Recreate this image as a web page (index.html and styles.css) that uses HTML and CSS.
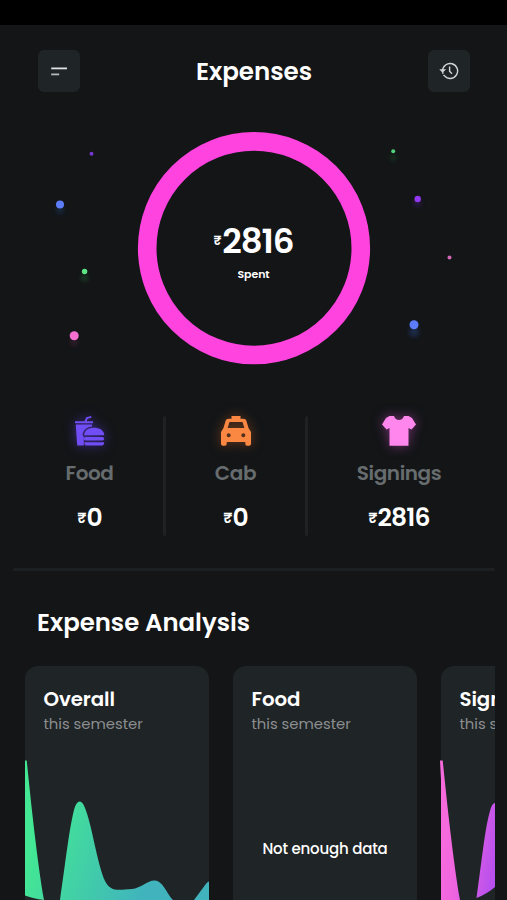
FILE: index.html
```html
<!DOCTYPE html>
<html lang="en">
<head>
<meta charset="utf-8">
<title>Expenses</title>
<link rel="stylesheet" href="styles.css">
</head>
<body>
<div class="status"></div>
<header class="header">
  <button class="icon-btn" aria-label="Menu">
    <svg width="18" height="18" viewBox="0 0 18 18" fill="none" stroke="#dfe2e3" stroke-width="1.8"><path d="M1.2 6.4H17"/><path d="M1.2 12.4H9.2" stroke="#b4b8ba"/></svg>
  </button>
  <h1>Expenses</h1>
  <button class="icon-btn" aria-label="History">
    <svg width="20" height="18" viewBox="0 0 20 18" fill="none" stroke="#d3d7d8" stroke-width="1.4"><path d="M3.600 9A7.500 7.500 0 1 1 5.600 14.100" /><path d="M5.600 14.100A7.500 7.500 0 0 1 3.600 9" stroke-dasharray="1.600 1.200"/><path d="M.8 7.500H6.600L3.600 10.500Z" fill="#d3d7d8" stroke-width=".5"/><path d="M10.600 4.600V9.200L13 11.700"/></svg>
  </button>
</header>
<section class="hero">
  <svg class="ring" width="507" height="256" viewBox="0 120 507 256">
    <defs><filter id="soft" x="-2" y="-2" width="5" height="5"><feGaussianBlur stdDeviation="2.2"/></filter></defs>
    <circle cx="254" cy="248.200" r="106.800" fill="none" stroke="#ff43df" stroke-width="18.600"/>
    <g filter="url(#soft)" opacity=".28">
      <circle cx="60" cy="210" r="4" fill="#2456a0"/><circle cx="84.500" cy="278" r="3.500" fill="#28a044"/><circle cx="74" cy="342" r="4" fill="#70305a"/>
      <circle cx="393" cy="158" r="3" fill="#28803a"/><circle cx="417.500" cy="203" r="4" fill="#5a2aa0"/><circle cx="414" cy="332" r="5" fill="#3468d0"/>
    </g>
    <circle cx="91.500" cy="153.700" r="2" fill="#7437cf"/><circle cx="60" cy="204.500" r="4" fill="#5c7cfa"/><circle cx="84.600" cy="271.500" r="2.700" fill="#5be584"/><circle cx="74.200" cy="335.800" r="4.500" fill="#f56fd3"/>
    <circle cx="393.200" cy="151.300" r="2" fill="#52d17b"/><circle cx="417.700" cy="199" r="3.200" fill="#9237f0"/><circle cx="449.500" cy="257.500" r="2" fill="#d567b8"/><circle cx="414" cy="324.800" r="4.500" fill="#5c7cfa"/>
  </svg>
  <div class="total">
    <div class="total-value"><span class="cur">₹</span><span>2816</span></div>
    <div class="total-label">Spent</div>
  </div>
</section>
<section class="stats">
  <div class="stat food">
    <svg class="glyph" width="30" height="32" viewBox="1 0 30 32" fill="currentColor"><path d="M1 6.200H10.500L12.300 2.200L17 1L17.600 2.700L13.700 3.800L12.600 6.200H19V8.200H1Z"/><path d="M1.700 9.500H18V11.400C13 12 9.300 14.800 8.700 19C8.300 20 9 21 9.800 21.700V30.600H3.200Z"/><path d="M10.200 20.200C10.200 15.300 14.700 12.800 20 12.800S30.200 15.300 30.200 20.200Z"/><rect x="9.800" y="22" width="20.400" height="3.600" rx="1.800"/><path d="M10.200 27.200H30.200C30.200 29.500 29 30.600 27.500 30.600H13C11.300 30.600 10.200 29.500 10.200 27.200Z"/></svg>
    <div class="label">Food</div>
    <div class="amount"><span class="cur">₹</span><span>0</span></div>
  </div>
  <div class="rule"></div>
  <div class="stat cab">
    <svg class="glyph" width="32" height="32" viewBox="0 0 32 32" fill="currentColor"><path fill-rule="evenodd" d="M11.500 1H20.500V3.800H23C25 3.800 26 4.600 26.500 6.200L28.500 13L31 17V28.500C31 30 30.300 30.700 29 30.700H27.200C26 30.700 25.300 30 25.300 28.500V27H6.700V28.500C6.700 30 6 30.700 4.800 30.700H3C1.700 30.700 1 30 1 28.500V17L3.500 13L5.500 6.200C6 4.600 7 3.800 9 3.800H11.500ZM9.500 7L7.600 13H24.400L22.500 7ZM8.700 18.300A2 2 0 1 0 8.700 22.300A2 2 0 1 0 8.700 18.300ZM23.300 18.300A2 2 0 1 0 23.300 22.300A2 2 0 1 0 23.300 18.300Z"/></svg>
    <div class="label">Cab</div>
    <div class="amount"><span class="cur">₹</span><span>0</span></div>
  </div>
  <div class="rule"></div>
  <div class="stat signings">
    <svg class="glyph" width="36" height="32" viewBox="0 0 36 32" fill="currentColor"><path d="M8.500 1H13C14 3.500 15.500 5 18 5S22 3.500 23 1H27.500L31 3L35 9.500L30.500 14.500L27.500 13V30.700H8.500V13L5.500 14.500L1 9.500L5 3Z"/></svg>
    <div class="label">Signings</div>
    <div class="amount"><span class="cur">₹</span><span>2816</span></div>
  </div>
</section>
<hr>
<h2>Expense Analysis</h2>
<section class="cards">
  <article class="card">
    <h3>Overall</h3><p class="sub">this semester</p>
    <svg class="chart" width="184" height="140" viewBox="0 0 184 140"><defs><linearGradient id="g1" gradientUnits="userSpaceOnUse" x1="0" y1="110" x2="115" y2="150"><stop stop-color="#43e794"/><stop offset="1" stop-color="#40b3bd"/></linearGradient></defs><path fill="url(#g1)" d="M0 .500H1.700C6 42 12 100 19 140C12 139 6 138 0 135.500ZM35 140C41 99 44 70 49 50C52 39 57 39 60 48C67 65 72 103 80 121C86 132 92 130 107 129C116 128 123 120 130 120.500C138 121 142 134 148 140ZM169 140L179 126.500Q182 122 184 121.500V140Z"/></svg>
  </article>
  <article class="card">
    <h3>Food</h3><p class="sub">this semester</p>
    <div class="empty">Not enough data</div>
  </article>
  <article class="card">
    <h3>Signings</h3><p class="sub">this semester</p>
    <svg class="chart" width="184" height="140" viewBox="0 0 184 140"><defs><linearGradient id="g2" gradientUnits="userSpaceOnUse" x1="0" y1="90" x2="62" y2="100"><stop stop-color="#f66bdc"/><stop offset=".3" stop-color="#ef65e0"/><stop offset="1" stop-color="#ad4cf0"/></linearGradient></defs><path fill="url(#g2)" d="M-1 .500H1.700C6 42 12 100 19 140H0V20ZM35.500 138C41 99 44 68 49 51Q51 43 54 43V127Q46 134 35.500 138Z"/></svg>
  </article>
</section>
</body>
</html>
```
FILE: styles.css
```css
* { box-sizing: border-box; margin: 0; padding: 0; }
body {
  width: 507px; height: 900px; overflow: hidden;
  background: #131517; color: #fff;
  font-family: Poppins, Inter, "Noto Sans", sans-serif;
  font-weight: 600;
}
span { display: inline-block; white-space: nowrap; }
.status { height: 25px; background: #000; }
.header { display: flex; justify-content: space-between; align-items: center; height: 92px; padding: 0 37px 0 38px; }
.icon-btn { display: grid; place-items: center; width: 42px; height: 42px; border: 0; border-radius: 6px; background: #1f2426; }
h1 { font-size: 24.6px; line-height: 30px; font-weight: 600; padding-top: 1px; letter-spacing: -0.05px; }
.hero { display: grid; height: 256px; margin-top: 3px; }
.ring, .total { grid-area: 1 / 1; }
.total { padding-top: 100px; text-align: center; }
.total-value { display: flex; justify-content: center; align-items: center; height: 42px; font-size: 34px; line-height: 42px; letter-spacing: -1.1px; }
.total-value .cur { font-size: 13px; letter-spacing: 0.8px; }
.total-label { font-size: 11px; line-height: 16px; margin-top: 4px; letter-spacing: -0.1px; }
.stats { display: flex; height: 120px; margin-top: 40px; }
.rule { width: 3px; border-radius: 2px; background: #1e2224; }
.stat { display: flex; flex-direction: column; align-items: center; }
.food { width: 147px; margin-left: 16px; }
.cab { width: 139px; }
.signings { width: 182px; }
.glyph { display: block; flex: none; margin-top: -1px; overflow: visible; }
.food .glyph { color: #714df5; filter: drop-shadow(0 0 6px #5b3ce299); }
.cab .glyph { color: #fa8843; filter: drop-shadow(0 0 6px #c95f2480); }
.signings .glyph { color: #ff86ec; filter: drop-shadow(0 0 6px #d64dcb80); }
.label { font-size: 20px; line-height: 24px; margin-top: 14px; color: #676c6e; letter-spacing: -0.4px; }
.amount { display: flex; align-items: center; font-size: 25px; line-height: 30px; margin-top: 18px; letter-spacing: -0.8px; }
.amount .cur { font-size: 15px; letter-spacing: 0; }
hr { height: 3px; margin: 32px 12px 0 13px; border: 0; border-radius: 2px; background: #1c2022; }
h2 { font-size: 24.4px; line-height: 30px; font-weight: 600; margin: 37px 0 0 37px; }
.cards { display: flex; gap: 24px; width: 470px; margin: 28px 0 0 25px; height: 234px; overflow: hidden; }
.card { flex: none; display: flex; flex-direction: column; width: 184px; height: 270px; padding-top: 21px; border-radius: 13px; background: #1f2426; }
h3 { font-size: 19.8px; line-height: 24px; font-weight: 600; padding-left: 18.5px; letter-spacing: -0.1px; }
.sub { font-size: 14.9px; line-height: 20px; font-weight: 400; color: #8b8e90; padding-left: 18.5px; margin-top: 3px; letter-spacing: -0.05px; }
.chart { display: block; flex: none; margin-top: 26px; overflow: visible; }
.empty { margin-top: 105px; font-size: 15px; line-height: 20px; font-weight: 500; text-align: center; letter-spacing: -0.2px; }
```
